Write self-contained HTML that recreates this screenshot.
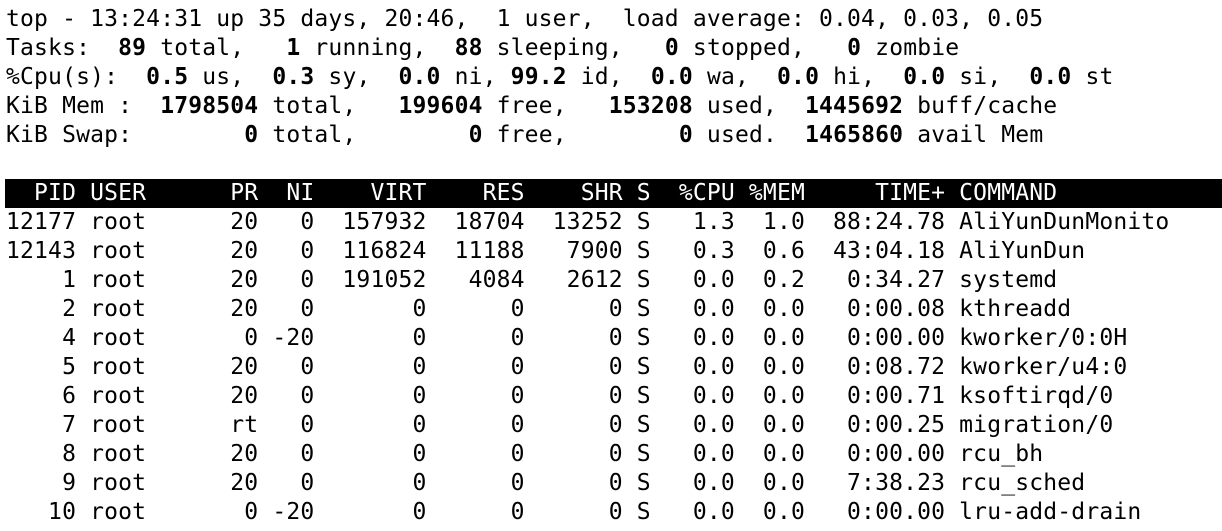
<!DOCTYPE html>
<html><head><meta charset="utf-8"><style>
html,body{margin:0;padding:0;background:#fff;width:1222px;height:531px;overflow:hidden}
pre{margin:0;position:absolute;left:6px;top:5px;font-family:"DejaVu Sans Mono","Liberation Mono",monospace;font-size:23px;letter-spacing:0.17px;line-height:29px;color:#000}
b{font-weight:bold}
.h{background:#000;color:#fff;display:inline-block;width:1217px;margin-left:-1px;padding-left:1px}
</style></head><body><pre>top - 13:24:31 up 35 days, 20:46,  1 user,  load average: 0.04, 0.03, 0.05
Tasks:  <b>89</b> total,   <b>1</b> running,  <b>88</b> sleeping,   <b>0</b> stopped,   <b>0</b> zombie
%Cpu(s):  <b>0.5</b> us,  <b>0.3</b> sy,  <b>0.0</b> ni, <b>99.2</b> id,  <b>0.0</b> wa,  <b>0.0</b> hi,  <b>0.0</b> si,  <b>0.0</b> st
KiB Mem :  <b>1798504</b> total,   <b>199604</b> free,   <b>153208</b> used,  <b>1445692</b> buff/cache
KiB Swap:        <b>0</b> total,        <b>0</b> free,        <b>0</b> used.  <b>1465860</b> avail Mem

<span class="h">  PID USER      PR  NI    VIRT    RES    SHR S  %CPU %MEM     TIME+ COMMAND</span>
12177 root      20   0  157932  18704  13252 S   1.3  1.0  88:24.78 AliYunDunMonito
12143 root      20   0  116824  11188   7900 S   0.3  0.6  43:04.18 AliYunDun
    1 root      20   0  191052   4084   2612 S   0.0  0.2   0:34.27 systemd
    2 root      20   0       0      0      0 S   0.0  0.0   0:00.08 kthreadd
    4 root       0 -20       0      0      0 S   0.0  0.0   0:00.00 kworker/0:0H
    5 root      20   0       0      0      0 S   0.0  0.0   0:08.72 kworker/u4:0
    6 root      20   0       0      0      0 S   0.0  0.0   0:00.71 ksoftirqd/0
    7 root      rt   0       0      0      0 S   0.0  0.0   0:00.25 migration/0
    8 root      20   0       0      0      0 S   0.0  0.0   0:00.00 rcu_bh
    9 root      20   0       0      0      0 S   0.0  0.0   7:38.23 rcu_sched
   10 root       0 -20       0      0      0 S   0.0  0.0   0:00.00 lru-add-drain
</pre></body></html>
